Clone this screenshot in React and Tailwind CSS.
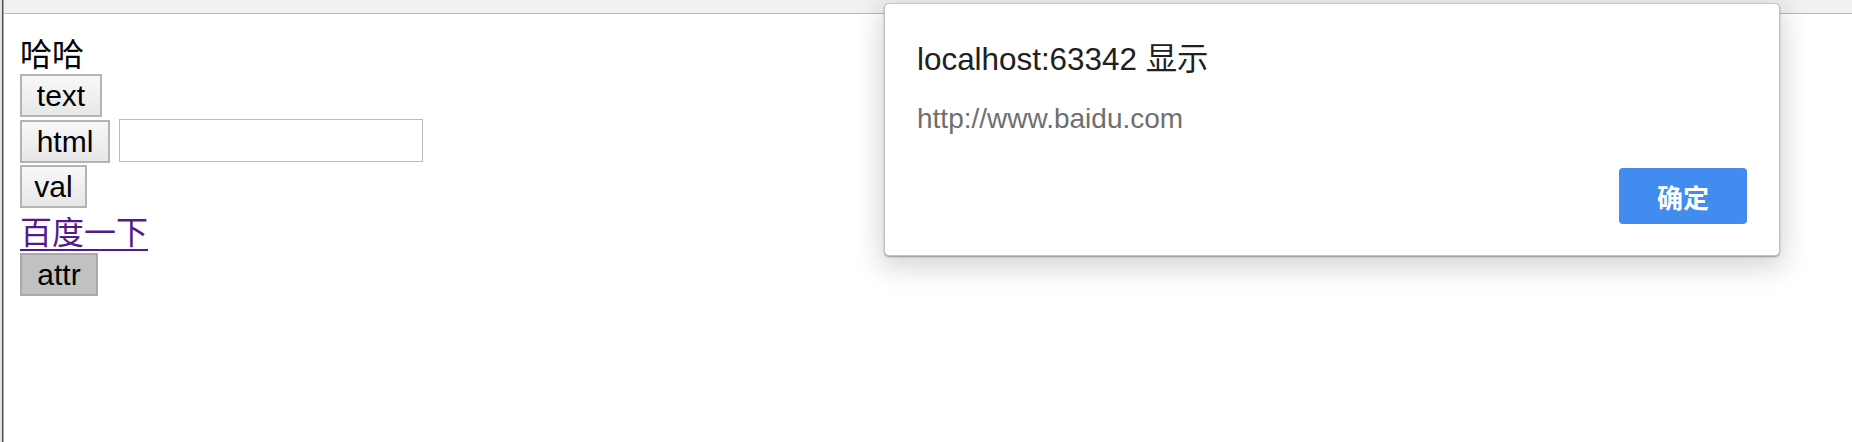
import React from 'react';

const sans = "font-['Liberation_Sans','Noto_Sans_CJK_SC',sans-serif]";
const cjk = "font-['Noto_Sans_CJK_SC','Liberation_Sans',sans-serif]";

function PageButton({ label, width, pressed }) {
  const look = pressed
    ? 'bg-[#c1c1c1] border-[#a9a9a9]'
    : 'bg-linear-to-b from-[#f8f8f8] to-[#e7e7e7] border-[#b4b4b4]';
  return (
    <button
      className={`${width} h-[43px] border-2 ${look} flex items-center justify-center text-[30px] text-black ${sans}`}
    >
      {label}
    </button>
  );
}

function AlertDialog() {
  return (
    <div className="absolute left-[884px] top-[3px] w-[896px] h-[253px] bg-white rounded-[5px] border border-[#c4c4c4] shadow-[0_8px_28px_4px_rgba(0,0,0,0.16),0_1px_2px_rgba(0,0,0,0.35)] flex flex-col px-[32px]">
      <div className={`pt-[35px] leading-[36px] text-[31.4px] text-[#202020] ${sans}`}>
        localhost:63342 <span className={cjk}>显示</span>
      </div>
      <div className={`mt-[25px] leading-[32px] text-[28px] text-[#6f6f6f] ${sans}`}>
        http://www.baidu.com
      </div>
      <div className="mt-auto pb-[31px] flex justify-end">
        <button className={`w-[128px] h-[56px] rounded-[4px] bg-[#428cf0] text-white font-bold text-[26px] flex items-center justify-center ${cjk}`}>
          确定
        </button>
      </div>
    </div>
  );
}

export default function App() {
  return (
    <div className="relative w-[1852px] h-[442px] bg-white overflow-hidden flex">
      {/* window edge */}
      <div className="w-[2px] bg-[#e2e2e2]" />
      <div className="w-[1px] bg-[#4c4c4c]" />
      <div className="w-[1px] bg-[#a8a8a8]" />

      <div className="flex-1 flex flex-col">
        {/* toolbar remnant */}
        <div className="h-[14px] bg-[#f1f1f1] border-b border-[#b9b9b9]" />

        <div className="flex flex-col items-start pl-[16px] pt-[16px]">
          <div className={`h-[44px] leading-[44px] text-[32px] text-black ${cjk}`}>哈哈</div>

          <PageButton label="text" width="w-[82px]" />

          <div className="mt-[3px] flex items-start">
            <PageButton label="html" width="w-[90px]" />
            <input className="ml-[9px] -mt-[1px] w-[304px] h-[43px] border border-[#bdbdbd] bg-white outline-none" />
          </div>

          <div className="mt-[2px]">
            <PageButton label="val" width="w-[67px]" />
          </div>

          <a
            href="#"
            className={`h-[45px] leading-[45px] text-[32px] text-[#551a8b] underline decoration-2 underline-offset-[5px] ${cjk}`}
          >
            百度一下
          </a>

          <PageButton label="attr" width="w-[78px]" pressed />
        </div>
      </div>

      <AlertDialog />
    </div>
  );
}
